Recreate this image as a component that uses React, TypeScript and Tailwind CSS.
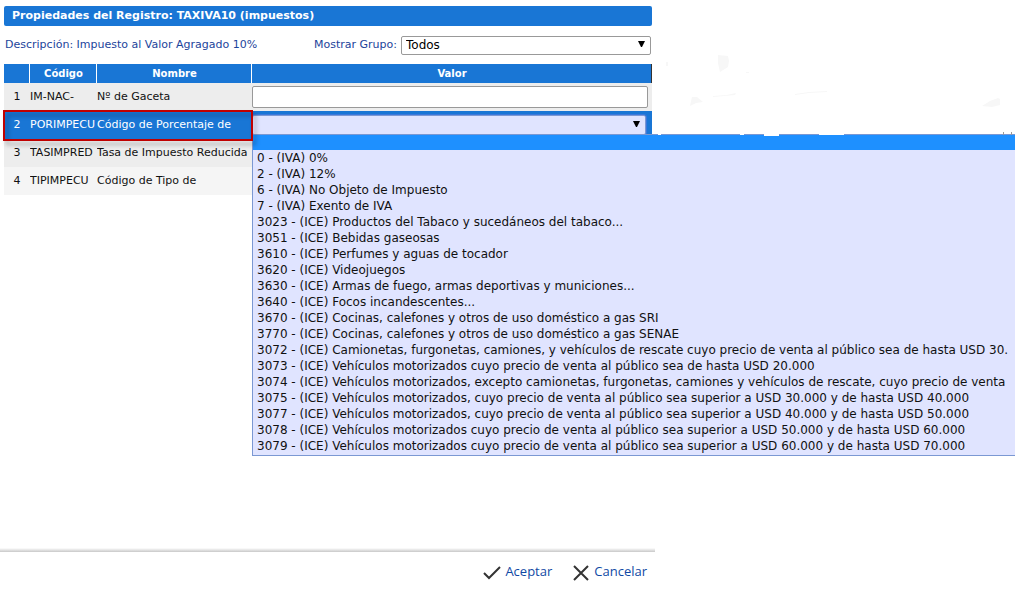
import { useState } from "react";

interface Property {
  code: string;
  name: string;
  selected?: boolean;
  input?: boolean;
}

const properties: Property[] = [
  { code: "IM-NAC-", name: "Nº de Gaceta", input: true },
  { code: "PORIMPECU", name: "Código de Porcentaje de", selected: true },
  { code: "TASIMPRED", name: "Tasa de Impuesto Reducida" },
  { code: "TIPIMPECU", name: "Código de Tipo de" },
];

const taxOptions = [
  "0 - (IVA) 0%",
  "2 - (IVA) 12%",
  "6 - (IVA) No Objeto de Impuesto",
  "7 - (IVA) Exento de IVA",
  "3023 - (ICE) Productos del Tabaco y sucedáneos del tabaco...",
  "3051 - (ICE) Bebidas gaseosas",
  "3610 - (ICE) Perfumes y aguas de tocador",
  "3620 - (ICE) Videojuegos",
  "3630 - (ICE) Armas de fuego, armas deportivas y municiones...",
  "3640 - (ICE) Focos incandescentes...",
  "3670 - (ICE) Cocinas, calefones y otros de uso doméstico a gas SRI",
  "3770 - (ICE) Cocinas, calefones y otros de uso doméstico a gas SENAE",
  "3072 - (ICE) Camionetas, furgonetas, camiones, y vehículos de rescate cuyo precio de venta al público sea de hasta USD 30.",
  "3073 - (ICE) Vehículos motorizados cuyo precio de venta al público sea de hasta USD 20.000",
  "3074 - (ICE) Vehículos motorizados, excepto camionetas, furgonetas, camiones y vehículos de rescate, cuyo precio de venta",
  "3075 - (ICE) Vehículos motorizados, cuyo precio de venta al público sea superior a USD 30.000 y de hasta USD 40.000",
  "3077 - (ICE) Vehículos motorizados, cuyo precio de venta al público sea superior a USD 40.000 y de hasta USD 50.000",
  "3078 - (ICE) Vehículos motorizados cuyo precio de venta al público sea superior a USD 50.000 y de hasta USD 60.000",
  "3079 - (ICE) Vehículos motorizados cuyo precio de venta al público sea superior a USD 60.000 y de hasta USD 70.000",
];

const Caret = () => (
  <svg className="pointer-events-none absolute right-1.5 top-1/2 -mt-1 h-[7px] w-[7px]" viewBox="0 0 7 7" aria-hidden="true">
    <path d="M0 0h7L4 6H3z" fill="#000" />
  </svg>
);

// Faint smudges and the broken edge above the open list
const Smudges = () => (
  <svg className="pointer-events-none absolute left-[640px] top-10 z-20 h-[100px] w-[375px]" viewBox="0 0 375 100" aria-hidden="true">
    <g fill="#f7f7f7">
      <path d="M78 15l10 1 1 5-1 6-8 5-2-9zM51 61l1-4 5 0 6 5-7 1-6 3zM342 66l8-5 8-3 2 1v6l-8 2zM26 22h2v4h-2zM106 32h3v1h-3z" />
      <path d="M73 56l14-1 9-2-1 2-22 2zM155 54l14-2 18-1v1l-18 1-14 2z" />
    </g>
    <path d="M18 94h3v1h-3zM100 94h4v1h-4zM124 94h15v2h-15zM179 94h25v1h-25z" fill="#fff" />
    <path d="M363 92h1v3h-1zM371 92h1v3h-1z" fill="#999" />
  </svg>
);

const TaxList = () => (
  <ul
    role="listbox"
    aria-label="Código de Porcentaje de"
    className="absolute left-0 top-[23px] z-10 w-screen whitespace-nowrap border border-[#7b98d3] bg-[#e0e4ff] pb-px text-left text-[12px] leading-4 text-[#111]"
  >
    <li role="option" aria-selected="true" className="h-[15px] bg-[#1e90ff]" />
    {taxOptions.map((option) => (
      <li key={option} role="option" aria-selected="false" className="px-1">
        {option}
      </li>
    ))}
  </ul>
);

export default function App() {
  const [group, setGroup] = useState("Todos");
  const [gazette, setGazette] = useState("");

  return (
    <div className="relative flex min-h-screen flex-col overflow-hidden bg-white font-['Verdana','DejaVu_Sans',sans-serif]">
      <main className="w-full max-w-[655px] flex-1 pl-1 pr-[3px] pt-1.5">
        <h1 className="h-5 rounded-xs bg-[#1976d5] px-2 text-[11px] font-bold leading-5 text-white">
          Propiedades del Registro: TAXIVA10 (impuestos)
        </h1>

        <div className="flex h-[38px] items-center justify-between pr-px text-[11px] text-[#1c449b]">
          <p className="px-px">Descripción: Impuesto al Valor Agragado 10%</p>
          <div className="flex items-center gap-1">
            <label htmlFor="group">Mostrar Grupo:</label>
            <div className="relative">
              <select
                id="group"
                value={group}
                onChange={(e) => setGroup(e.target.value)}
                className="block h-[19px] w-[250px] appearance-none rounded-xs border border-[#999] bg-white px-1 text-[12px] leading-4 text-black"
              >
                <option>Todos</option>
              </select>
              <Caret />
            </div>
          </div>
        </div>

        <table className="w-full table-fixed border-collapse text-[11px] text-[#111]">
          <colgroup>
            <col className="w-[26px]" />
            <col className="w-[67px]" />
            <col className="w-[155px]" />
            <col />
          </colgroup>
          <thead>
            <tr className="h-[19px] bg-[#1976d5] text-[10px] text-white">
              <th className="p-0 shadow-[inset_-1px_0_#fff]" aria-label="Número" />
              <th className="p-0 shadow-[inset_-1px_0_#fff]">Código</th>
              <th className="p-0 shadow-[inset_-1px_0_#fff]">Nombre</th>
              <th className="p-0 shadow-[inset_-1px_0_#333]">Valor</th>
            </tr>
          </thead>
          <tbody>
            {properties.map((property, index) => (
              <tr
                key={property.code}
                className={
                  property.selected
                    ? "h-7 bg-[#1976d5] text-white"
                    : index === 3
                      ? "h-7 bg-[#f5f5f5]"
                      : "h-7 bg-[#ededed]"
                }
              >
                <td className="relative p-0 text-center">
                  {index + 1}
                  {property.selected && (
                    <span className="pointer-events-none absolute -left-px -top-px z-20 h-[31px] w-[250px] border-2 border-[#c00000] drop-shadow-[3px_4px_2px_rgba(0,0,0,0.3)]" />
                  )}
                </td>
                <td className="overflow-hidden whitespace-nowrap p-0">{property.code}</td>
                <td className="overflow-hidden whitespace-nowrap p-0">{property.name}</td>
                <td className="relative p-0 pr-1">
                  {property.input && (
                    <input
                      type="text"
                      aria-label={property.name}
                      value={gazette}
                      onChange={(e) => setGazette(e.target.value)}
                      className="block h-[22px] w-full rounded-xs border border-[#999] bg-white px-1"
                    />
                  )}
                  {property.selected && (
                    <>
                      <div className="relative mr-0.5">
                        <select
                          aria-label={property.name}
                          className="block h-5 w-full appearance-none rounded-xs border border-[#7b98d3] bg-[#e0e4ff] px-1 text-black outline outline-[#3b78dc]"
                        >
                          <option value="" />
                        </select>
                        <Caret />
                      </div>
                      <TaxList />
                    </>
                  )}
                </td>
              </tr>
            ))}
          </tbody>
        </table>
      </main>

      <footer className="w-full max-w-[655px]">
        <div className="h-1 bg-linear-to-b from-white to-[#c8c8c8]" />
        <div className="flex h-10 items-center justify-end gap-5 pr-2 font-['Open_Sans',sans-serif] text-[13px] text-[#1049a4]">
          <button type="button" className="flex items-center gap-1">
            <svg className="h-[18px] w-[18px]" viewBox="0 0 18 18" fill="none" stroke="#333" strokeWidth="2" aria-hidden="true">
              <path d="M1 10l5 5L17 4" />
            </svg>
            Aceptar
          </button>
          <button type="button" className="flex items-center gap-1">
            <svg className="h-[18px] w-[18px]" viewBox="0 0 18 18" fill="none" stroke="#333" strokeWidth="2" aria-hidden="true">
              <path d="M2 3l14 14M16 3L2 17" />
            </svg>
            Cancelar
          </button>
        </div>
      </footer>
      <Smudges />
    </div>
  );
}
